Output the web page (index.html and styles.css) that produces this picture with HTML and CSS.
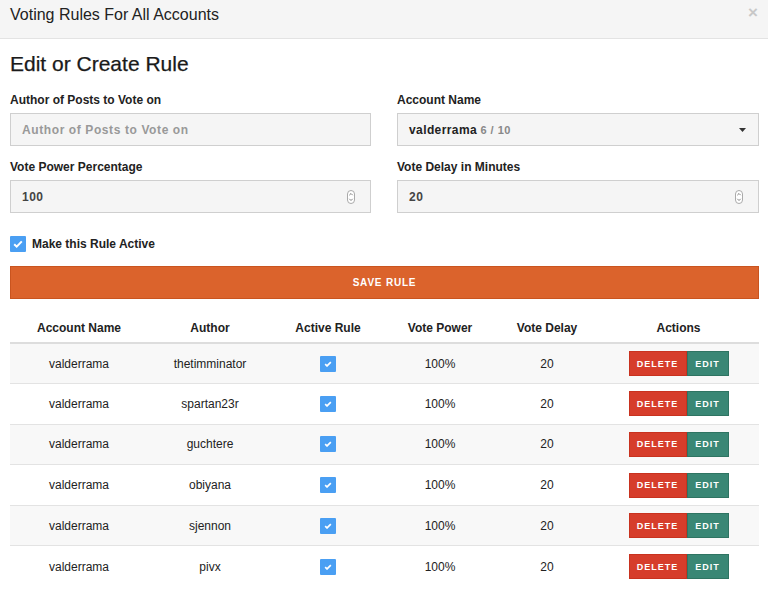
FILE: index.html
```html
<!DOCTYPE html>
<html>
<head>
<meta charset="utf-8">
<link rel="stylesheet" href="styles.css">
</head>
<body>
<div class="modal">
  <div class="modal-header">
    <h1 class="modal-title">Voting Rules For All Accounts</h1>
    <span class="close">&times;</span>
  </div>
  <div class="modal-body">
    <h2 class="section-title">Edit or Create Rule</h2>
    <div class="form-grid">
      <div class="field">
        <label class="label">Author of Posts to Vote on</label>
        <div class="input placeholder">Author of Posts to Vote on</div>
      </div>
      <div class="field">
        <label class="label">Account Name</label>
        <div class="input select"><span><b class="acct">valderrama</b> <span class="count">6 / 10</span></span>
          <svg class="caret" width="7" height="4" viewBox="0 0 7 4"><path d="M0 0h7L3.5 4z" fill="#333"/></svg>
        </div>
      </div>
      <div class="field">
        <label class="label">Vote Power Percentage</label>
        <div class="input number"><span>100</span>
          <span class="spin"><svg width="8" height="14" viewBox="0 0 8 14"><rect x="0.5" y="0.5" width="7" height="13" rx="3.5" fill="#fff" stroke="#aaa"/><path d="M2.3 5.2L4 3.5l1.7 1.7M2.3 8.8L4 10.5l1.7-1.7" fill="none" stroke="#777" stroke-width="0.9"/></svg></span>
        </div>
      </div>
      <div class="field">
        <label class="label">Vote Delay in Minutes</label>
        <div class="input number"><span>20</span>
          <span class="spin"><svg width="8" height="14" viewBox="0 0 8 14"><rect x="0.5" y="0.5" width="7" height="13" rx="3.5" fill="#fff" stroke="#aaa"/><path d="M2.3 5.2L4 3.5l1.7 1.7M2.3 8.8L4 10.5l1.7-1.7" fill="none" stroke="#777" stroke-width="0.9"/></svg></span>
        </div>
      </div>
    </div>
    <div class="check-row">
      <span class="cbox big"><svg width="10" height="8" viewBox="0 0 10 8"><path d="M1.2 4.2l2.5 2.4L8.8 1.4" fill="none" stroke="#fff" stroke-width="2"/></svg></span>
      <span class="check-label">Make this Rule Active</span>
    </div>
    <button class="save">SAVE RULE</button>
    <table class="rules">
      <thead>
        <tr><th class="c1">Account Name</th><th class="c2">Author</th><th class="c3">Active Rule</th><th class="c4">Vote Power</th><th class="c5">Vote Delay</th><th class="c6">Actions</th></tr>
      </thead>
      <tbody>
        <tr><td>valderrama</td><td>thetimminator</td><td><span class="cbox"><svg width="8" height="6" viewBox="0 0 10 8"><path d="M1.2 4.2l2.5 2.4L8.8 1.4" fill="none" stroke="#fff" stroke-width="2.2"/></svg></span></td><td>100%</td><td>20</td><td><span class="btns"><span class="del">DELETE</span><span class="edit">EDIT</span></span></td></tr>
        <tr><td>valderrama</td><td>spartan23r</td><td><span class="cbox"><svg width="8" height="6" viewBox="0 0 10 8"><path d="M1.2 4.2l2.5 2.4L8.8 1.4" fill="none" stroke="#fff" stroke-width="2.2"/></svg></span></td><td>100%</td><td>20</td><td><span class="btns"><span class="del">DELETE</span><span class="edit">EDIT</span></span></td></tr>
        <tr><td>valderrama</td><td>guchtere</td><td><span class="cbox"><svg width="8" height="6" viewBox="0 0 10 8"><path d="M1.2 4.2l2.5 2.4L8.8 1.4" fill="none" stroke="#fff" stroke-width="2.2"/></svg></span></td><td>100%</td><td>20</td><td><span class="btns"><span class="del">DELETE</span><span class="edit">EDIT</span></span></td></tr>
        <tr><td>valderrama</td><td>obiyana</td><td><span class="cbox"><svg width="8" height="6" viewBox="0 0 10 8"><path d="M1.2 4.2l2.5 2.4L8.8 1.4" fill="none" stroke="#fff" stroke-width="2.2"/></svg></span></td><td>100%</td><td>20</td><td><span class="btns"><span class="del">DELETE</span><span class="edit">EDIT</span></span></td></tr>
        <tr><td>valderrama</td><td>sjennon</td><td><span class="cbox"><svg width="8" height="6" viewBox="0 0 10 8"><path d="M1.2 4.2l2.5 2.4L8.8 1.4" fill="none" stroke="#fff" stroke-width="2.2"/></svg></span></td><td>100%</td><td>20</td><td><span class="btns"><span class="del">DELETE</span><span class="edit">EDIT</span></span></td></tr>
        <tr><td>valderrama</td><td>pivx</td><td><span class="cbox"><svg width="8" height="6" viewBox="0 0 10 8"><path d="M1.2 4.2l2.5 2.4L8.8 1.4" fill="none" stroke="#fff" stroke-width="2.2"/></svg></span></td><td>100%</td><td>20</td><td><span class="btns"><span class="del">DELETE</span><span class="edit">EDIT</span></span></td></tr>
      </tbody>
    </table>
  </div>
</div>
</body>
</html>
```
FILE: styles.css
```css
* { box-sizing: border-box; }
html, body { margin: 0; padding: 0; background: #fff; }
body { font-family: "Liberation Sans", Arial, sans-serif; color: #222; width: 768px; height: 595px; overflow: hidden; }

.modal-header {
  height: 39px;
  background: #f5f5f5;
  border-bottom: 1px solid #e3e3e3;
  display: flex;
  align-items: center;
  justify-content: space-between;
  padding: 0 10px;
}
.modal-title { margin: 0; font-size: 16px; font-weight: normal; color: #222; padding-bottom: 8px; }
.close { color: #c8c8c8; font-size: 17px; font-weight: bold; padding-bottom: 12px; margin-right: 0; }

.modal-body { padding: 0 9px 0 10px; }
.section-title { margin: 12px 0 0 0; font-size: 21px; font-weight: normal; color: #1a1a1a; line-height: 26px; -webkit-text-stroke: 0.25px #1a1a1a; }

.form-grid {
  display: grid;
  grid-template-columns: 361px 362px;
  column-gap: 26px;
  row-gap: 14px;
  margin-top: 16px;
}
.field { display: flex; flex-direction: column; }
.label { font-size: 12px; font-weight: bold; color: #222; line-height: 14px; margin-bottom: 6px; }
.input {
  height: 33px;
  background: #f5f5f5;
  border: 1px solid #cfcfcf;
  display: flex;
  align-items: center;
  justify-content: space-between;
  padding: 0 11px 0 11px;
  font-size: 12px;
  font-weight: bold;
  color: #444;
}
.placeholder { color: #999; letter-spacing: 0.6px; }
.acct { color: #222; letter-spacing: 0.4px; }
.count { color: #888; font-weight: bold; font-size: 11px; letter-spacing: 0.5px; }
.caret { margin-right: 1px; }
.number span:first-child { letter-spacing: 0.5px; }
.spin { display: flex; margin-right: 4px; }

.check-row { display: flex; align-items: center; margin-top: 23px; height: 16px; }
.cbox {
  display: inline-flex;
  align-items: center;
  justify-content: center;
  width: 16px;
  height: 16px;
  background: #4a9ff3;
  border-radius: 1px;
  vertical-align: middle;
}
.check-label { margin-left: 6px; font-size: 12px; font-weight: bold; color: #222; }

.save {
  display: block;
  width: 749px;
  height: 33px;
  margin-top: 14px;
  background: #db632c;
  border: 1px solid #c9541f;
  color: #fff;
  font-family: "Liberation Sans", Arial, sans-serif;
  font-weight: bold;
  font-size: 10px;
  letter-spacing: 0.8px;
  padding: 0;
}

.rules {
  width: 749px;
  border-collapse: collapse;
  margin-top: 17px;
  font-size: 12px;
}
.rules th {
  font-weight: bold;
  color: #222;
  height: 27px;
  padding: 0 0 3px 0;
  text-align: center;
  border-bottom: 2px solid #ddd;
  vertical-align: middle;
}
.c1 { width: 138px; }
.c2 { width: 124px; }
.c3 { width: 112px; }
.c4 { width: 112px; }
.c5 { width: 102px; }
.rules td {
  height: 40.6px;
  padding: 0;
  text-align: center;
  vertical-align: middle;
  color: #222;
  border-bottom: 1px solid #e3e3e3;
}
.rules tbody tr:nth-child(odd) td { background: #f8f8f8; }
.rules tbody tr:last-child td { border-bottom: none; }
.rules td .cbox { width: 16px; height: 16px; }

.btns { display: inline-flex; height: 25px; }
.btns span {
  display: inline-flex;
  align-items: center;
  justify-content: center;
  color: #fff;
  font-size: 9px;
  font-weight: bold;
  letter-spacing: 1px;
}
.del { width: 58px; background: #d63d2b; border: 1px solid #c8321f; }
.edit { width: 42px; background: #3a8775; border: 1px solid #2f7462; }
```
